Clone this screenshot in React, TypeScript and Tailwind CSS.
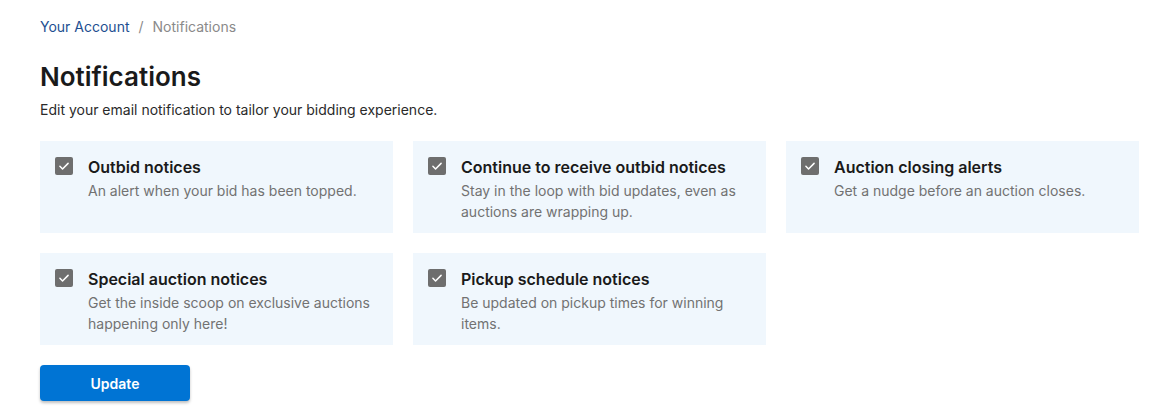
import React, { useState } from 'react'

const items = [
  { id: 'outbid', title: 'Outbid notices', desc: 'An alert when your bid has been topped.' },
  { id: 'continue', title: 'Continue to receive outbid notices', desc: 'Stay in the loop with bid updates, even as auctions are wrapping up.' },
  { id: 'closing', title: 'Auction closing alerts', desc: 'Get a nudge before an auction closes.' },
  { id: 'special', title: 'Special auction notices', desc: 'Get the inside scoop on exclusive auctions happening only here!' },
  { id: 'pickup', title: 'Pickup schedule notices', desc: 'Be updated on pickup times for winning items.' },
]

function Check({ checked, onClick }: { checked: boolean; onClick: () => void }) {
  return (
    <button
      type="button"
      onClick={onClick}
      className={`w-[18px] h-[18px] shrink-0 rounded-[2px] flex items-center justify-center ${checked ? 'bg-[#6e6e6e]' : 'bg-white border-2 border-[#6e6e6e]'}`}
    >
      {checked && (
        <svg width="14" height="14" viewBox="0 0 24 24" fill="none" stroke="white" strokeWidth="2.6" strokeLinecap="round" strokeLinejoin="round">
          <path d="M5 12.5l4.5 4.5L19 7.5" />
        </svg>
      )}
    </button>
  )
}

export default function App() {
  const [state, setState] = useState<Record<string, boolean>>({
    outbid: true, continue: true, closing: true, special: true, pickup: true,
  })

  return (
    <div className="w-[1176px] h-[412px] bg-white px-10 pt-[17px] font-['Inter',sans-serif] text-[#1d1d1f]">
      <nav className="flex items-center gap-[9px] text-[14px] leading-[20px]">
        <a className="text-[#1d4f91]">Your Account</a>
        <span className="text-[#8a8a8a]">/</span>
        <span className="text-[#8a8a8a]">Notifications</span>
      </nav>

      <h1 className="mt-[23px] text-[26px] leading-[34px] font-semibold text-[#1a1a1a]">Notifications</h1>
      <p className="mt-[6px] text-[14px] leading-[20px] text-[#2a2a2a]">Edit your email notification to tailor your bidding experience.</p>

      <div className="mt-[21px] grid grid-cols-3 gap-5 w-[1099px]">
        {items.map((it) => (
          <div key={it.id} className="bg-[#f0f7fd] h-[92px] pl-[15px] pr-4 pt-4 flex gap-[15px]">
            <Check checked={state[it.id]} onClick={() => setState({ ...state, [it.id]: !state[it.id] })} />
            <div className="-mt-[2px]">
              <h3 className="text-[16px] leading-[24px] font-semibold text-[#1a1a1a]">{it.title}</h3>
              <p className="mt-[1px] text-[14px] leading-[21px] text-[#727272]">{it.desc}</p>
            </div>
          </div>
        ))}
      </div>

      <button className="mt-5 w-[150px] h-9 rounded-[4px] bg-[#0074d4] text-white text-[14px] font-semibold shadow-[0_2px_3px_rgba(0,0,0,0.25)]">
        Update
      </button>
    </div>
  )
}
